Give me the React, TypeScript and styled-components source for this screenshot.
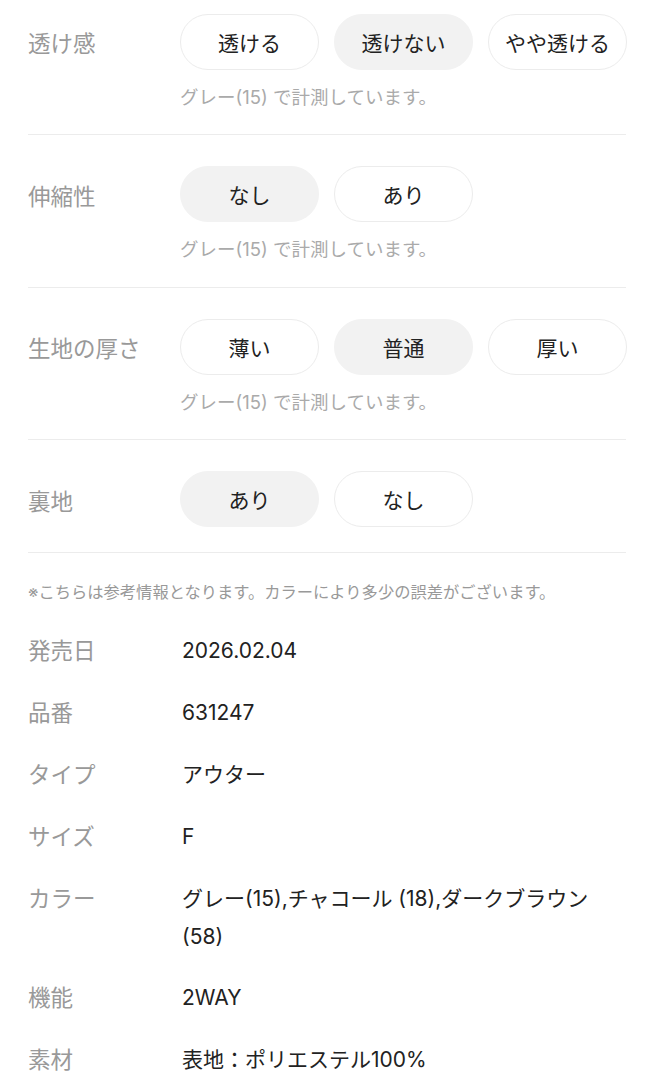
import * as React from 'react'
import styled, { createGlobalStyle } from 'styled-components'

const GlobalStyle = createGlobalStyle`
  html, body {
    margin: 0;
    padding: 0;
    background: #fff;
  }
  body {
    font-family: Inter, "Noto Sans CJK JP", "Noto Sans", sans-serif;
    color: #222;
    -webkit-font-smoothing: antialiased;
  }
`

const Page = styled.div`
  width: 654px;
  padding: 0 28px;
  box-sizing: border-box;
`

const Section = styled.section<{ $last?: boolean }>`
  padding: ${({ $last }) => ($last ? '0 0 25px' : '0 0 26.5px')};
  border-bottom: 1px solid #ececec;

  & + & {
    padding-top: 31px;
  }
  &:first-child {
    padding-top: 13.5px;
  }
`

const SectionRow = styled.div`
  display: grid;
  grid-template-columns: 152px 1fr;
  align-items: center;
`

const Label = styled.div`
  font-size: 22.5px;
  line-height: 30px;
  color: #999;
  padding-top: 5px;
`

const Options = styled.div`
  display: flex;
  gap: 15px;
`

const Option = styled.div<{ $selected?: boolean }>`
  width: 139px;
  height: 56px;
  box-sizing: border-box;
  border-radius: 28px;
  border: 1px solid ${({ $selected }) => ($selected ? '#f2f2f2' : '#ececec')};
  background: ${({ $selected }) => ($selected ? '#f2f2f2' : '#fff')};
  display: flex;
  align-items: center;
  justify-content: center;
  font-size: 21px;
  color: #222;
`

const Note = styled.p`
  margin: 16px 0 0 152px;
  font-size: 18.5px;
  line-height: 22px;
  color: #aaa;
`

const Footnote = styled.p`
  margin: 28px 0 0;
  font-size: 16.3px;
  line-height: 22px;
  color: #999;
  white-space: nowrap;
`

const SpecList = styled.dl`
  margin: 29px 0 0;
  display: grid;
  grid-template-columns: 154px 1fr;
  row-gap: 24px;
`

const SpecLabel = styled.dt`
  margin: 0;
  font-size: 22.5px;
  line-height: 38px;
  color: #999;
`

const SpecValue = styled.dd`
  margin: 0;
  font-size: 21px;
  line-height: 37.5px;
  color: #222;
`

type Attr = {
  label: string
  options: string[]
  selected: number
  note?: boolean
}

const attrs: Attr[] = [
  { label: '透け感', options: ['透ける', '透けない', 'やや透ける'], selected: 1, note: true },
  { label: '伸縮性', options: ['なし', 'あり'], selected: 0, note: true },
  { label: '生地の厚さ', options: ['薄い', '普通', '厚い'], selected: 1, note: true },
  { label: '裏地', options: ['あり', 'なし'], selected: 0 },
]

const specs: [string, string][] = [
  ['発売日', '2026.02.04'],
  ['品番', '631247'],
  ['タイプ', 'アウター'],
  ['サイズ', 'F'],
  ['カラー', 'グレー(15),チャコール (18),ダークブラウン (58)'],
  ['機能', '2WAY'],
  ['素材', '表地：ポリエステル100%'],
]

export default function App() {
  return (
    <Page>
      <GlobalStyle />
      {attrs.map((a, i) => (
        <Section key={a.label} $last={i === attrs.length - 1}>
          <SectionRow>
            <Label>{a.label}</Label>
            <Options>
              {a.options.map((o, j) => (
                <Option key={o} $selected={j === a.selected}>
                  {o}
                </Option>
              ))}
            </Options>
          </SectionRow>
          {a.note && <Note>グレー(15) で計測しています。</Note>}
        </Section>
      ))}
      <Footnote>※こちらは参考情報となります。カラーにより多少の誤差がございます。</Footnote>
      <SpecList>
        {specs.map(([k, v]) => (
          <React.Fragment key={k}>
            <SpecLabel>{k}</SpecLabel>
            <SpecValue>{v}</SpecValue>
          </React.Fragment>
        ))}
      </SpecList>
    </Page>
  )
}
